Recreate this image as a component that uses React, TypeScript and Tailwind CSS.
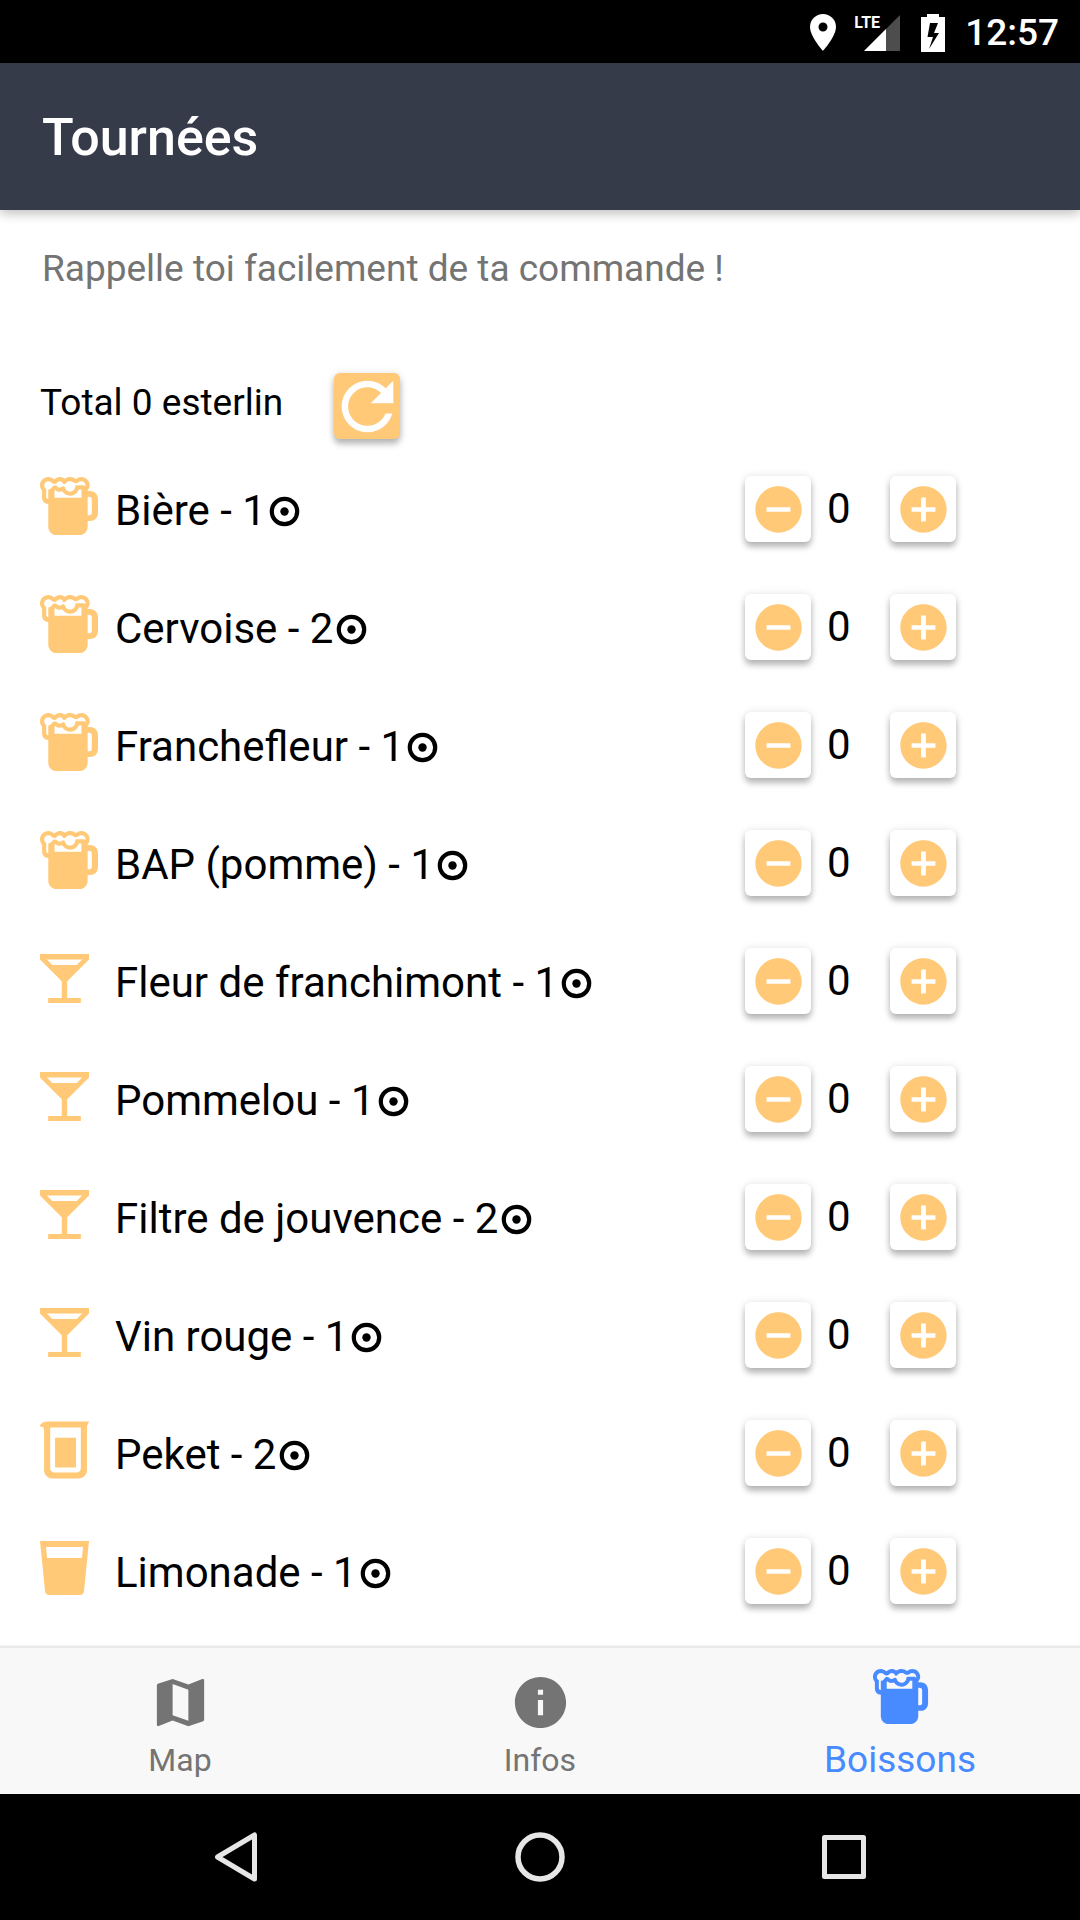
import React, { useState } from 'react';
import { IoMdAddCircle, IoMdBeaker, IoMdBeer, IoMdInformationCircle, IoMdMap, IoMdRefresh, IoMdRemoveCircle, IoMdWine } from 'react-icons/io';

type DrinkIconName = 'beer' | 'wine' | 'beaker' | 'glass';

interface Drink {
    name: string;
    price: number;
    icon: DrinkIconName;
}

const DRINKS: Drink[] = [
    { name: 'Bière', price: 1, icon: 'beer' },
    { name: 'Cervoise', price: 2, icon: 'beer' },
    { name: 'Franchefleur', price: 1, icon: 'beer' },
    { name: 'BAP (pomme)', price: 1, icon: 'beer' },
    { name: 'Fleur de franchimont', price: 1, icon: 'wine' },
    { name: 'Pommelou', price: 1, icon: 'wine' },
    { name: 'Filtre de jouvence', price: 2, icon: 'wine' },
    { name: 'Vin rouge', price: 1, icon: 'wine' },
    { name: 'Peket', price: 2, icon: 'beaker' },
    { name: 'Limonade', price: 1, icon: 'glass' },
];

const GlassIcon = () => (
    <svg viewBox="0 0 49 54" className="w-[49px] h-[54px]" fill="currentColor" fillRule="evenodd" aria-hidden="true">
        <path d="M0 0h49l-5 50q-.5 4-4.500 4h-30q-4 0-4.500-4zM6 6l1 11h35l1-11z" />
    </svg>
);

const CoinIcon = () => (
    <svg viewBox="0 0 37 37" className="w-[37px] h-[37px]" aria-hidden="true">
        <circle cx="18.500" cy="18.500" r="12.700" fill="none" stroke="currentColor" strokeWidth="4.200" />
        <circle cx="18.500" cy="18.500" r="4.200" fill="currentColor" />
    </svg>
);

// viewBox is trimmed so every icon starts on the left edge of its column
const DrinkIcon: React.FC<{ name: DrinkIconName }> = ({ name }) => {
    if (name === 'beer') return <IoMdBeer viewBox="32 32 448 448" className="w-[58px] h-[58px]" />;
    if (name === 'wine') return <IoMdWine viewBox="64 64 384 384" className="w-[49px] h-[49px]" />;
    if (name === 'beaker') return <IoMdBeaker viewBox="64 32 384 448" className="w-[49px] h-[58px]" />;
    return <GlassIcon />;
};

const StatusBar = () => (
    <div className="h-[63px] bg-black text-white flex items-center justify-end pt-0.5 pr-[21px]">
        <svg viewBox="0 0 26 37" className="w-[26px] h-[37px] mr-7" fill="currentColor" fillRule="evenodd" aria-hidden="true">
            <path d="M13 0a13 13 0 0 1 13 13c0 9.500-13 24-13 24S0 22.500 0 13A13 13 0 0 1 13 0zm0 8.500a4.500 4.500 0 1 0 0 9 4.500 4.500 0 0 0 0-9z" />
        </svg>
        <div className="relative mr-[21px]">
            <svg viewBox="0 0 36 36" className="w-9 h-9" aria-hidden="true">
                <path d="M36 0v36H0z" fill="#4d4d4d" />
                <path d="M22 14v22H0z" fill="#fff" />
            </svg>
            <span className="absolute right-5 top-0 text-[16px] leading-4 font-bold">LTE</span>
        </div>
        <svg viewBox="0 0 24 38" className="w-6 h-[38px] mr-5" fill="currentColor" fillRule="evenodd" aria-hidden="true">
            <path d="M6 0h12v3h6v35H0V3h6zM9 9L6.500 23H12l-4 12 10-16h-5l4-10z" />
        </svg>
        <span className="text-[37px] leading-none font-medium">12:57</span>
    </div>
);

interface StepButtonProps {
    label: string;
    onClick: () => void;
    children: React.ReactNode;
}

const StepButton: React.FC<StepButtonProps> = ({ label, onClick, children }) => (
    <button
        onClick={onClick}
        aria-label={label}
        className="w-[66px] h-[66px] rounded-md bg-white text-[#ffc977] flex items-center justify-center shadow-[0_5px_6px_rgba(0,0,0,0.26),0_0_8px_rgba(0,0,0,0.1)]"
    >
        {children}
    </button>
);

interface DrinkRowProps {
    drink: Drink;
    count: number;
    onChange: (delta: number) => void;
}

const DrinkRow: React.FC<DrinkRowProps> = ({ drink, count, onChange }) => (
    <li className="h-[118px] pl-10 pr-[124px] flex items-center">
        <div className="w-[75px] pb-1.5 text-[#ffc977]">
            <DrinkIcon name={drink.icon} />
        </div>
        <div className="flex-1 pt-1 text-[42px] leading-[50px] flex items-center">
            <span>{drink.name} - {drink.price}</span>
            <CoinIcon />
        </div>
        <StepButton label={`Retirer ${drink.name}`} onClick={() => onChange(-1)}>
            <IoMdRemoveCircle className="w-[57px] h-[57px]" />
        </StepButton>
        <span className="w-[79px] pl-4 text-[42px] leading-[50px]">{count}</span>
        <StepButton label={`Ajouter ${drink.name}`} onClick={() => onChange(1)}>
            <IoMdAddCircle className="w-[57px] h-[57px]" />
        </StepButton>
    </li>
);

const TabBar = () => (
    <nav className="h-[148px] bg-[#f8f8f8] border-t-2 border-[#e9e9e9] grid grid-cols-3 text-[32px] leading-10 text-[#747474] shadow-[0_-1px_2px_rgba(0,0,0,0.06)]">
        <a href="#map" className="flex flex-col items-center justify-end pb-3.5">
            <span className="h-[60px] mb-2 flex items-center"><IoMdMap className="w-[63px] h-[63px]" /></span>
            Map
        </a>
        <a href="#infos" className="flex flex-col items-center justify-end pb-3.5">
            <span className="h-[60px] mb-2 flex items-center"><IoMdInformationCircle className="w-[63px] h-[63px]" /></span>
            Infos
        </a>
        <a href="#boissons" aria-current="page" className="flex flex-col items-center justify-end pb-3.5 text-[37px] text-[#488aff]">
            <span className="h-[60px] mb-2 pb-3 flex items-center"><IoMdBeer className="w-[63px] h-[63px]" /></span>
            Boissons
        </a>
    </nav>
);

const SystemNav = () => (
    <div className="h-[126px] bg-black px-[84px] grid grid-cols-3 place-items-center">
        <button aria-label="Retour">
            <svg viewBox="0 0 50 50" className="w-[50px] h-[50px]" fill="none" stroke="#e6e6e6" strokeWidth="5" strokeLinejoin="round" aria-hidden="true">
                <path d="M43.500 3v44L6.500 25z" />
            </svg>
        </button>
        <button aria-label="Accueil">
            <svg viewBox="0 0 50 50" className="w-[50px] h-[50px]" fill="none" stroke="#e6e6e6" strokeWidth="5.500" aria-hidden="true">
                <circle cx="25" cy="25" r="22" />
            </svg>
        </button>
        <button aria-label="Applications récentes">
            <svg viewBox="0 0 50 50" className="w-[50px] h-[50px]" fill="none" stroke="#e6e6e6" strokeWidth="5" strokeLinejoin="round" aria-hidden="true">
                <path d="M5.500 5.500h39v39h-39z" />
            </svg>
        </button>
    </div>
);

export default function App() {
    const [counts, setCounts] = useState<number[]>(DRINKS.map(() => 0));

    const total = DRINKS.reduce((sum, drink, index) => sum + drink.price * counts[index], 0);

    const handleChange = (index: number, delta: number) => {
        setCounts(counts.map((count, i) => (i === index ? Math.max(0, count + delta) : count)));
    };

    return (
        <div className="min-h-screen flex flex-col bg-white text-black font-['Roboto',sans-serif]">
            <StatusBar />
            <header className="h-[147px] pt-0.5 px-[42px] bg-[#363b49] flex items-center shadow-[0_4px_10px_rgba(0,0,0,0.24)]">
                <h1 className="text-[52px] leading-none font-medium text-white">Tournées</h1>
            </header>
            <main className="flex-1">
                <p className="pt-[37px] px-[42px] text-[37px] leading-[44px] text-[#747474]">Rappelle toi facilement de ta commande !</p>
                <div className="pt-[82px] px-10 flex items-center">
                    <span className="pb-1.5 text-[37px] leading-[44px]">Total {total} esterlin</span>
                    <button
                        onClick={() => setCounts(DRINKS.map(() => 0))}
                        aria-label="Remettre à zéro"
                        className="w-[66px] h-[66px] ml-[51px] rounded-md bg-[#ffc977] text-white flex items-center justify-center shadow-[0_5px_6px_rgba(0,0,0,0.26),0_0_8px_rgba(0,0,0,0.1)]"
                    >
                        <IoMdRefresh className="w-[75px] h-[75px] shrink-0" />
                    </button>
                </div>
                <ul className="pt-[11px]">
                    {DRINKS.map((drink, index) => (
                        <DrinkRow
                            key={drink.name}
                            drink={drink}
                            count={counts[index]}
                            onChange={(delta) => handleChange(index, delta)}
                        />
                    ))}
                </ul>
            </main>
            <TabBar />
            <SystemNav />
        </div>
    );
}
